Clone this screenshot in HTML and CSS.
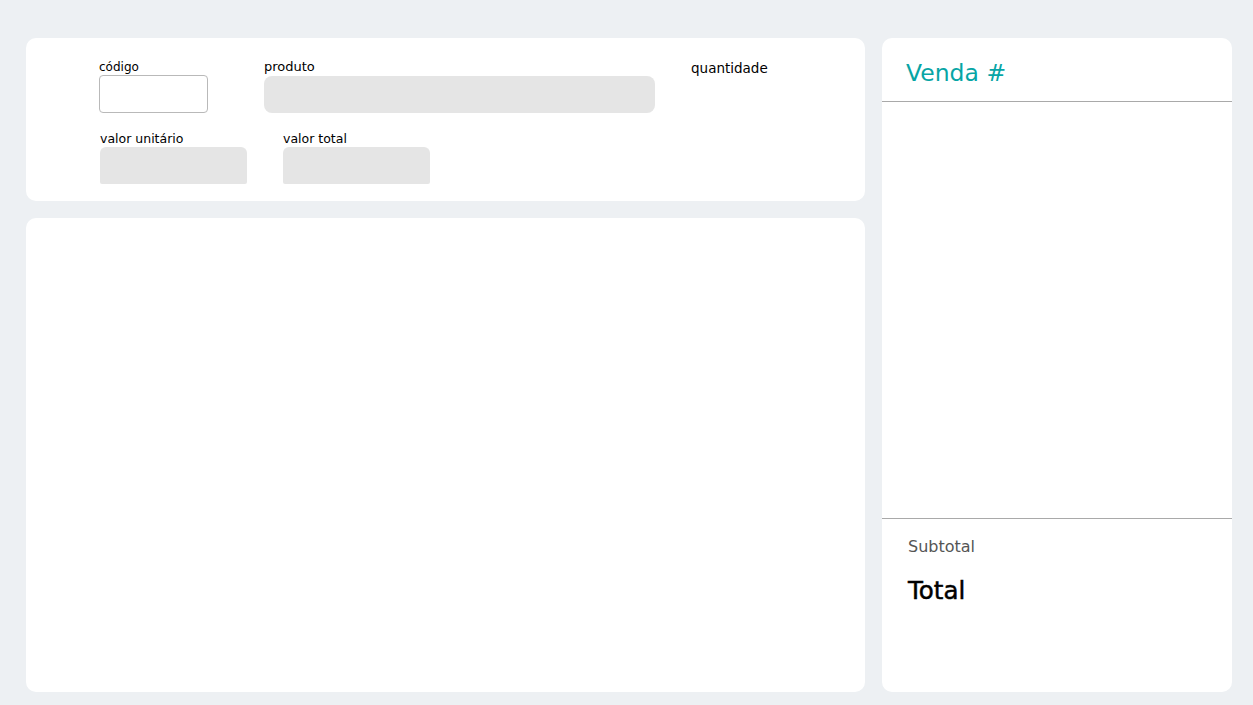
FILE: index.html
```html
<!DOCTYPE html>
<html lang="pt">
<head>
<meta charset="utf-8">
<title>Venda</title>
<link rel="stylesheet" href="styles.css">
</head>
<body>
<div class="layout">
  <div class="left">
    <section class="card form-card">
      <div class="row row-1">
        <div class="field f-codigo">
          <label class="label">código</label>
          <div class="input input-outline"></div>
        </div>
        <div class="field f-produto">
          <label class="label">produto</label>
          <div class="input input-filled"></div>
        </div>
        <div class="field f-qtd">
          <label class="label">quantidade</label>
        </div>
      </div>
      <div class="row row-2">
        <div class="field f-unit">
          <label class="label">valor unitário</label>
          <div class="input input-filled input-cut"></div>
        </div>
        <div class="field f-total">
          <label class="label">valor total</label>
          <div class="input input-filled input-cut"></div>
        </div>
      </div>
    </section>
    <section class="card list-card"></section>
  </div>
  <aside class="card sale-card">
    <header class="sale-header">Venda #</header>
    <div class="sale-items"></div>
    <footer class="sale-footer">
      <div class="subtotal">Subtotal</div>
      <div class="total">Total</div>
    </footer>
  </aside>
</div>
</body>
</html>
```
FILE: styles.css
```css
* { box-sizing: border-box; }
html, body { margin: 0; padding: 0; }
body {
  background: #edf0f3;
  font-family: "DejaVu Sans", "Noto Sans", sans-serif;
  color: #000;
  width: 1253px;
  height: 705px;
  overflow: hidden;
}
.layout {
  display: grid;
  grid-template-columns: 839px 350px;
  column-gap: 17px;
  padding: 38px 21px 13px 26px;
  height: 705px;
}
.left {
  display: flex;
  flex-direction: column;
  gap: 17px;
  min-height: 0;
}
.card {
  background: #fff;
  border-radius: 10px;
}
.form-card {
  height: 163px;
  padding: 20px 0 0 73px;
}
.list-card { flex: 1; }
.row { display: flex; align-items: flex-start; }
.row-1 { gap: 36px; }
.row-2 { gap: 36px; margin-top: 17px; padding-left: 1px; }
.field { display: flex; flex-direction: column; }
.label {
  font-size: 12.5px;
  line-height: 17px;
  height: 17px;
  color: #000;
  white-space: nowrap;
}
.f-codigo { width: 109px; margin-right: 20px; }
.f-codigo .label { font-size: 12px; padding-top: 1px; }
.f-produto { width: 391px; }
.f-produto .label { font-size: 13px; height: 18px; }
.f-qtd .label { font-size: 13.5px; padding-top: 2px; }
.f-unit, .f-total { width: 147px; }
.input { height: 38px; }
.input-outline {
  border: 1px solid #b9b9b9;
  border-radius: 4px;
  background: #fff;
}
.input-filled {
  background: #e5e5e5;
  border-radius: 8px;
  height: 37px;
}
.input-cut { border-radius: 6px 6px 2px 2px; }

.sale-card {
  display: flex;
  flex-direction: column;
  min-height: 0;
}
.sale-header {
  height: 64px;
  border-bottom: 1px solid #a9a9a9;
  padding: 20px 0 0 24px;
  font-size: 23.5px;
  line-height: 30px;
  color: #07a5a5;
}
.sale-items { flex: 1; }
.sale-footer {
  height: 174px;
  border-top: 1px solid #a9a9a9;
  padding: 16px 26px 0 26px;
}
.subtotal {
  font-size: 16px;
  line-height: 24px;
  color: #555;
}
.total {
  margin-top: 16px;
  padding-top: 1px;
  font-size: 24.5px;
  line-height: 30px;
  color: #000;
  -webkit-text-stroke: 0.5px #000;
}
```
